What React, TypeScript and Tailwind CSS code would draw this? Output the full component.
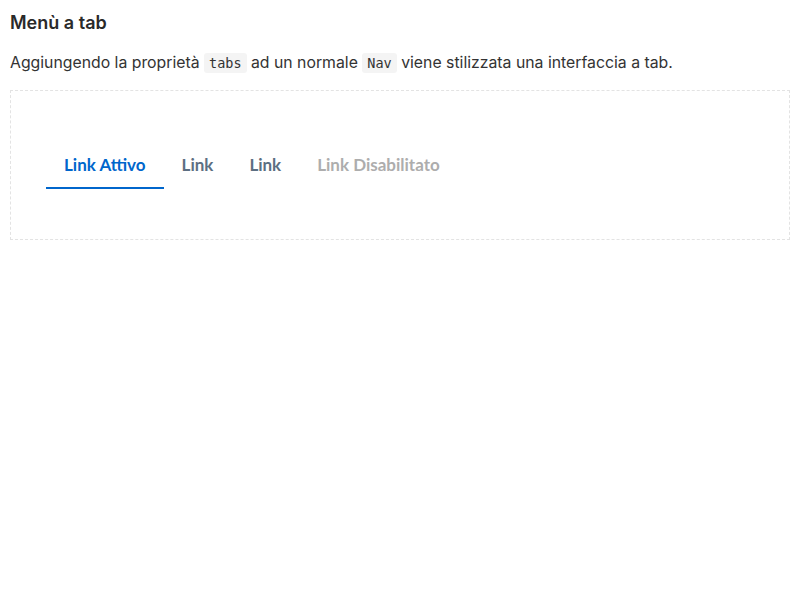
const tabs = [
    { label: "Link Attivo", state: "active" },
    { label: "Link", state: "normal" },
    { label: "Link", state: "normal" },
    { label: "Link Disabilitato", state: "disabled" },
];

const App: React.FC = () => {
    return (
        <div className="px-[10px] pt-[10px] font-['Inter',sans-serif] text-[#19191a]">
            <h3 className="text-[18px] font-semibold leading-[26px] text-[#2a2a2a]">Menù a tab</h3>
            <p className="mt-[15px] text-[15.8px] leading-[24px] text-[#333]">
                Aggiungendo la proprietà{" "}
                <code className="rounded-[3px] bg-[#f4f4f4] px-[5px] py-[2px] font-['DejaVu_Sans_Mono',monospace] text-[13.5px] text-[#333]">tabs</code>{" "}
                ad un normale{" "}
                <code className="rounded-[3px] bg-[#f4f4f4] px-[5px] py-[2px] font-['DejaVu_Sans_Mono',monospace] text-[13.5px] text-[#333]">Nav</code>{" "}
                viene stilizzata una interfaccia a tab.
            </p>
            <div className="mt-[15px] w-[780px] border border-dashed border-[#e3e3e3] px-[35px] pt-[49px] pb-[50px]">
                <ul className="flex font-['Lato',sans-serif] text-[17px] font-bold">
                    {tabs.map((t, i) => (
                        <li key={i}>
                            <a
                                className={
                                    t.state === "active"
                                        ? "block border-b-2 border-[#0066cc] px-[18px] pt-[13px] pb-[10px] leading-[24px] text-[#0066cc]"
                                        : t.state === "disabled"
                                        ? "block border-b-2 border-transparent px-[18px] pt-[13px] pb-[10px] leading-[24px] text-[#adadad]"
                                        : "block border-b-2 border-transparent px-[18px] pt-[13px] pb-[10px] leading-[24px] text-[#5c6f82]"
                                }
                            >
                                {t.label}
                            </a>
                        </li>
                    ))}
                </ul>
            </div>
        </div>
    );
};

export default App;
